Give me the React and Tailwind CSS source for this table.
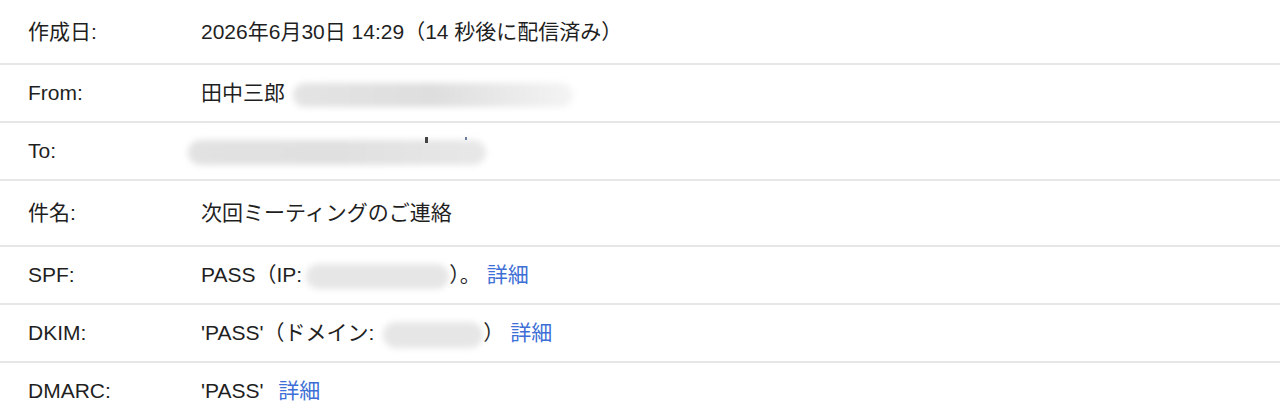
import React from 'react';

const Blur = ({ className }) => (
  <span className={`inline-block align-middle rounded-full blur-[3px] ${className}`} />
);

const Link = ({ children, className = '' }) => (
  <a href="#" className={`text-[#3d6fd6] ${className}`}>{children}</a>
);

const rows = [
  {
    label: '作成日:',
    h: 'h-[63px]',
    value: <>2026年6月30日 14:29（14 秒後に配信済み）</>,
  },
  {
    label: 'From:',
    h: 'h-[56px]',
    value: (
      <>
        田中三郎 <Blur className="h-[24px] w-[280px] ml-[2px] bg-gradient-to-r from-[#e4e4e4] via-[#dedede] to-[#f4f4f4]" />
      </>
    ),
  },
  {
    label: 'To:',
    h: 'h-[56px]',
    value: (
      <span className="relative inline-block -ml-[13px]">
        <Blur className="h-[25px] w-[298px] bg-gradient-to-r from-[#e2e2e2] via-[#e0e0e0] to-[#e8e8e8]" />
        <span className="absolute left-[237px] top-[2px] h-[6px] w-[3px] bg-[#444]" />
        <span className="absolute left-[277px] top-[2px] h-[3px] w-[2px] bg-[#6a7fa0]" />
      </span>
    ),
  },
  {
    label: '件名:',
    h: 'h-[64px]',
    value: <>次回ミーティングのご連絡</>,
  },
  {
    label: 'SPF:',
    h: 'h-[56px]',
    value: (
      <>
        PASS（IP:<Blur className="h-[25px] w-[143px] ml-[4px] bg-[#e6e6e6]" />）。<Link className="ml-[6px]">詳細</Link>
      </>
    ),
  },
  {
    label: 'DKIM:',
    h: 'h-[56px]',
    value: (
      <>
        'PASS'（ドメイン:<Blur className="h-[26px] w-[100px] ml-[9px] bg-[#e6e6e6]" />） <Link>詳細</Link>
      </>
    ),
  },
  {
    label: 'DMARC:',
    h: 'h-[55px]',
    value: (
      <>
        'PASS' <Link className="ml-[9px]">詳細</Link>
      </>
    ),
  },
];

export default function App() {
  return (
    <div className="w-[1280px] h-[418px] overflow-hidden bg-white text-[21px] text-[#1f1f1f] font-['Liberation_Sans','Noto_Sans_CJK_JP',sans-serif]">
      {rows.map((r, i) => (
        <div
          key={r.label}
          className={`flex items-center pl-[28px] ${r.h} ${i < rows.length - 1 ? 'border-b-2 border-[#e6e6e6]' : ''} box-content`}
        >
          <div className="w-[173px] shrink-0">{r.label}</div>
          <div className="whitespace-nowrap">{r.value}</div>
        </div>
      ))}
    </div>
  );
}
